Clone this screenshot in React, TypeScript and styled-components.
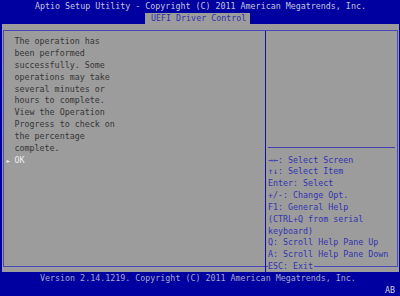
import styled, { createGlobalStyle } from "styled-components";

const ROW = 296 / 25;

const GlobalStyle = createGlobalStyle`
  html, body {
    margin: 0;
    padding: 0;
    background: #0000a0;
  }
  body {
    font-family: "DejaVu Sans Mono", "Liberation Mono", monospace;
    font-size: 8.33px;
  }
`;

const Screen = styled.div`
  width: 400px;
  height: 296px;
  display: flex;
  flex-direction: column;
  background: #0000a0;
  overflow: hidden;
  white-space: pre;
`;

const TitleBar = styled.div`
  height: ${ROW}px;
  line-height: ${ROW}px;
  padding: 1.2px 0 0 35px;
  box-sizing: border-box;
  color: #c4c4dc;
`;

const TabRow = styled.div`
  height: ${ROW}px;
  display: flex;
  padding-top: 1px;
  box-sizing: border-box;
`;

const Tab = styled.div`
  margin-left: 145px;
  width: 105px;
  padding: 0.5px 0 0 6px;
  box-sizing: border-box;
  background: #9c9c9c;
  color: #3030ac;
  line-height: ${ROW - 1}px;
`;

const Body = styled.div`
  height: ${ROW * 21}px;
  margin: 0 1.5px 0 2px;
  padding: 6px 1px 5px 1px;
  box-sizing: border-box;
  background: #9c9c9c;
  display: flex;
`;

const Frame = styled.div`
  flex: 1;
  border: 1.5px solid #4848b8;
  display: grid;
  grid-template-columns: 262px 1fr;
`;

const LeftPane = styled.div`
  border-right: 1.5px solid #1010a0;
  padding: 5.6px 0 0 0.5px;
`;

const Line = styled.div<{ $tone?: "dark" | "help" | "light" }>`
  height: ${ROW}px;
  line-height: ${ROW}px;
  color: ${(p) =>
    p.$tone === "help" ? "#3434b0" : p.$tone === "light" ? "#eeeeee" : "#363636"};
`;

const Indented = styled(Line)`
  padding-left: 10px;
`;

const OptionRow = styled(Line)`
  display: flex;
`;

const Pointer = styled.span`
  width: 8px;
  padding-left: 2px;
  font-size: 6px;
  color: #f4f4f4;
`;

const RightPane = styled.div`
  display: flex;
  flex-direction: column;
`;

const HelpTop = styled.div`
  height: 116.8px;
  flex: none;
  margin: 0 2px;
  border-bottom: 1px solid #4040b0;
`;

const HelpList = styled.div`
  padding: 6.2px 0 0 2px;
`;

const EdgeLabel = styled.span`
  background: #9c9c9c;
  padding-right: 1px;
`;

const Footer = styled.div`
  height: ${ROW * 2}px;
  display: flex;
  flex-direction: column;
`;

const FooterLine = styled.div<{ $end?: boolean }>`
  height: ${ROW}px;
  line-height: ${ROW}px;
  padding: 1px ${(p) => (p.$end ? "5px" : "0")} 0 ${(p) => (p.$end ? "0" : "40px")};
  box-sizing: border-box;
  text-align: ${(p) => (p.$end ? "right" : "left")};
  color: ${(p) => (p.$end ? "#d0d0dc" : "#a8a8cc")};
`;

const message = [
  "The operation has",
  "been performed",
  "successfully. Some",
  "operations may take",
  "several minutes or",
  "hours to complete.",
  "View the Operation",
  "Progress to check on",
  "the percentage",
  "complete.",
];

const help = [
  "→←: Select Screen",
  "↑↓: Select Item",
  "Enter: Select",
  "+/-: Change Opt.",
  "F1: General Help",
  "(CTRL+Q from serial",
  "keyboard)",
  "Q: Scroll Help Pane Up",
  "A: Scroll Help Pane Down",
];

export default function App() {
  return (
    <>
      <GlobalStyle />
      <Screen>
        <TitleBar>Aptio Setup Utility - Copyright (C) 2011 American Megatrends, Inc.</TitleBar>
        <TabRow>
          <Tab>UEFI Driver Control</Tab>
        </TabRow>
        <Body>
          <Frame>
            <LeftPane>
              {message.map((t) => (
                <Indented key={t}>{t}</Indented>
              ))}
              <OptionRow $tone="light">
                <Pointer>►</Pointer>
                <span>OK</span>
              </OptionRow>
            </LeftPane>
            <RightPane>
              <HelpTop />
              <HelpList>
                {help.map((t) => (
                  <Line key={t} $tone="help">
                    {t}
                  </Line>
                ))}
                <Line $tone="help">
                  <EdgeLabel>ESC: Exit</EdgeLabel>
                </Line>
              </HelpList>
            </RightPane>
          </Frame>
        </Body>
        <Footer>
          <FooterLine>Version 2.14.1219. Copyright (C) 2011 American Megatrends, Inc.</FooterLine>
          <FooterLine $end>AB</FooterLine>
        </Footer>
      </Screen>
    </>
  );
}
